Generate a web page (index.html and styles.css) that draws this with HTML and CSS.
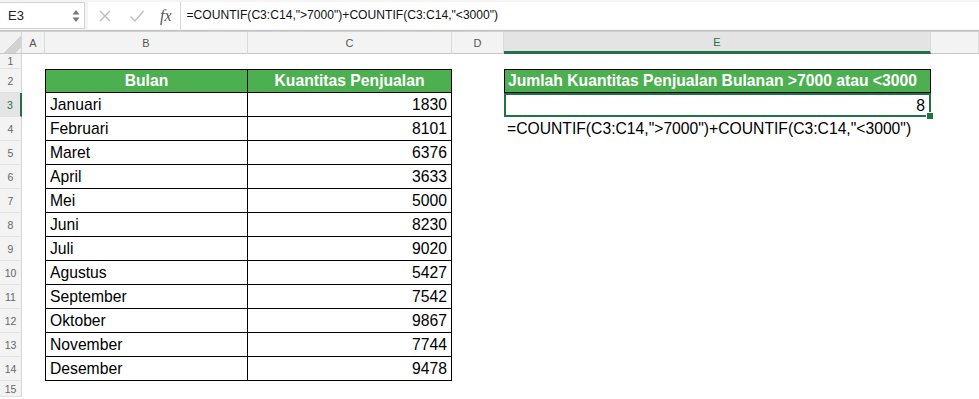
FILE: index.html
```html
<!DOCTYPE html>
<html lang="id">
<head>
    <meta charset="UTF-8">
    <title>COUNTIF</title>
    <link rel="stylesheet" href="styles.css">
</head>
<body>
    <!-- baris rumus -->
    <div class="formula-bar">
        <div class="name-box">
            <span>E3</span>
            <span class="spin">
                <svg width="8" height="14" viewBox="0 0 8 14"><path d="M4 1 L7.5 5.5 H0.5 Z M4 13 L7.5 8.5 H0.5 Z" fill="#777"/></svg>
            </span>
        </div>
        <div class="fx-tools">
            <svg class="tool" width="14" height="14" viewBox="0 0 14 14"><path d="M2 2 L12 12 M12 2 L2 12" stroke="#bdbdbd" stroke-width="1.4"/></svg>
            <svg class="tool" width="16" height="14" viewBox="0 0 16 14"><path d="M1.5 7.5 L6 12 L14.5 2" stroke="#bdbdbd" stroke-width="1.4" fill="none"/></svg>
            <span class="fx">fx</span>
        </div>
        <div class="formula-text">=COUNTIF(C3:C14,"&gt;7000")+COUNTIF(C3:C14,"&lt;3000")</div>
    </div>

    <div class="sheet" id="sheet"></div>

    <script>
        const data = [
            ["Januari", 1830], ["Februari", 8101], ["Maret", 6376],
            ["April", 3633], ["Mei", 5000], ["Juni", 8230],
            ["Juli", 9020], ["Agustus", 5427], ["September", 7542],
            ["Oktober", 9867], ["November", 7744], ["Desember", 9478]
        ];

        function cell(cls, text) {
            return `<div class="${cls}">${text || ""}</div>`;
        }

        let html = `<div class="corner"></div>`;
        ["A", "B", "C", "D", "E", ""].forEach(c => {
            html += cell(c === "E" ? "col-head active" : "col-head", c);
        });

        for (let r = 1; r <= 15; r++) {
            html += cell(r === 3 ? "row-head active" : "row-head", r);
            html += cell("c");
            if (r === 2) {
                html += cell("c tb head first", "Bulan");
                html += cell("c tb head", "Kuantitas Penjualan");
            } else if (r >= 3 && r <= 14) {
                const d = data[r - 3];
                html += cell("c tb first", d[0]);
                html += cell("c tb num", d[1]);
            } else {
                html += cell("c") + cell("c");
            }
            html += cell("c");
            if (r === 2) html += cell("c result-head", "Jumlah Kuantitas Penjualan Bulanan &gt;7000 atau &lt;3000");
            else if (r === 3) html += `<div class="c result num">8<span class="handle"></span></div>`;
            else if (r === 4) html += cell("c note", '=COUNTIF(C3:C14,"&gt;7000")+COUNTIF(C3:C14,"&lt;3000")');
            else html += cell("c");
            html += cell("c");
        }

        document.getElementById("sheet").innerHTML = html;
    </script>
</body>
</html>
```

FILE: styles.css
```css
body {
    margin: 0;
    width: 979px;
    height: 399px;
    overflow: hidden;
    background: #fff;
    font-family: "Liberation Sans", Arial, sans-serif;
}
.formula-bar {
    display: flex;
    align-items: center;
    height: 29px;
    background: #f4f4f4;
    border-bottom: 1px solid #c6c6c6;
    padding-top: 1px;
}
.name-box {
    display: flex;
    align-items: center;
    justify-content: space-between;
    width: 72px;
    height: 25px;
    padding: 0 4px 0 8px;
    background: #fff;
    border: 1px solid #d4d4d4;
    border-left: none;
    font-size: 13px;
    color: #222;
}
.spin {
    display: flex;
}
.fx-tools {
    display: flex;
    align-items: center;
    gap: 17px;
    height: 27px;
    margin-left: 3px;
    padding: 0 8px 0 10px;
    background: #fff;
    border-right: 1px solid #d6d6d6;
}
.fx {
    font-family: "Liberation Serif", serif;
    font-style: italic;
    font-size: 16px;
    color: #555;
    margin-left: -2px;
}
.formula-text {
    flex: 1;
    height: 27px;
    line-height: 27px;
    padding-left: 6px;
    background: #fff;
    font-size: 12.1px;
    color: #111;
}
.sheet {
    display: grid;
    grid-template-columns: 22px 23px 203px 204px 52px 427px 48px;
    grid-template-rows: 22px 15px repeat(13, 24px) 16px;
    border-top: 1px solid #d0d0d0;
}
.corner {
    background: #f1f1f1 linear-gradient(135deg, transparent 58%, #d2d2d2 58%, #d2d2d2 86%, transparent 86%);
    border-right: 1px solid #d4d4d4;
    border-bottom: 1px solid #c8c8c8;
}
.col-head {
    display: flex;
    align-items: center;
    justify-content: center;
    background: #f3f3f3;
    border-right: 1px solid #dadada;
    border-bottom: 1px solid #c8c8c8;
    font-size: 11px;
    color: #555;
}
.col-head.active {
    background: #e4e4e4;
    color: #217346;
    border-bottom: 3px solid #217346;
}
.row-head {
    display: flex;
    align-items: center;
    justify-content: center;
    background: #f3f3f3;
    border-right: 1px solid #d4d4d4;
    border-bottom: 1px solid #e2e2e2;
    font-size: 10.5px;
    color: #666;
}
.row-head.active {
    background: #e4e4e4;
    color: #217346;
    border-right: 2px solid #217346;
}
.c {
    font-size: 15.7px;
    color: #000;
    white-space: nowrap;
    line-height: 23px;
}
.tb {
    border-right: 1px solid #000;
    border-bottom: 1px solid #000;
    padding: 0 4px;
}
.tb.first {
    border-left: 1px solid #000;
}
.head {
    border-top: 1px solid #000;
    background: #4caf50;
    color: #fff;
    font-weight: bold;
    text-align: center;
    line-height: 22px;
}
.num {
    text-align: right;
}
.result-head {
    background: #4caf50;
    color: #fff;
    font-weight: bold;
    border: 1px solid #000;
    padding-left: 3px;
    line-height: 22px;
}
.result {
    position: relative;
    border: 2px solid #217346;
    padding-right: 4px;
    line-height: 22px;
}
.handle {
    position: absolute;
    right: -5px;
    bottom: -5px;
    width: 6px;
    height: 6px;
    background: #217346;
    border: 1px solid #fff;
}
.note {
    padding-left: 3px;
    overflow: visible;
}
```
